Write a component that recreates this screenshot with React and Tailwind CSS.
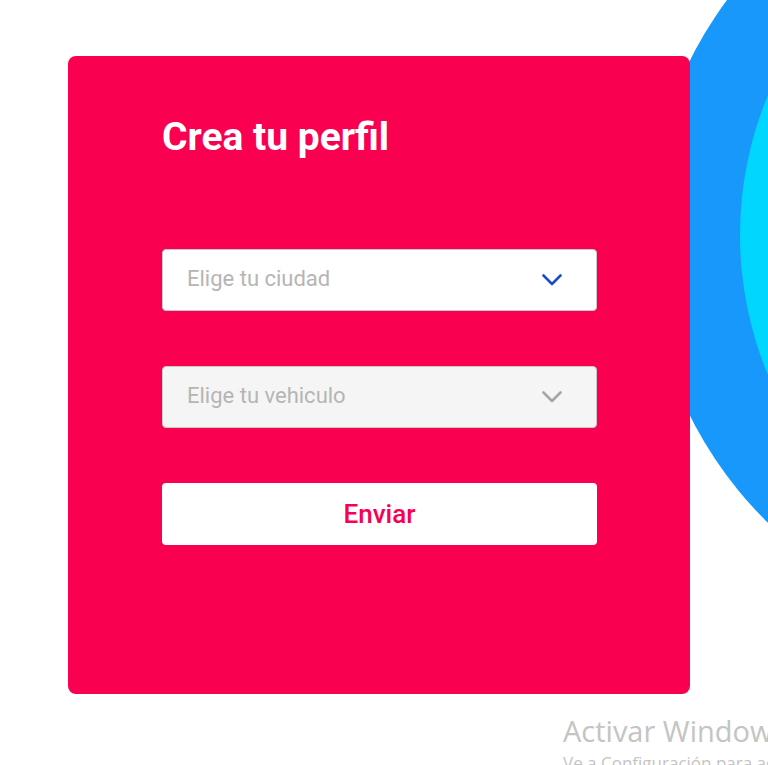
import React from 'react';

function Chevron({ className = '' }) {
  return (
    <svg className={className} width="20" height="12" viewBox="0 0 20 12" fill="none" stroke="currentColor">
      <path d="M1.5 1.5l8.5 8.5 8.5-8.5" strokeWidth="2.6" strokeLinecap="round" strokeLinejoin="round" />
    </svg>
  );
}

function SelectBox({ label, disabled = false }) {
  return (
    <div
      className={`flex items-center justify-between h-[62px] rounded-[4px] border border-[#c9c9c9] pl-[24px] pr-[34px] ${
        disabled ? 'bg-[#f5f5f5]' : 'bg-white'
      }`}
    >
      <span className="text-[22px] leading-[28px] -mt-[2px] text-[#b5b5b5]">{label}</span>
      <Chevron className={disabled ? 'text-[#a6a6a6]' : 'text-[#1b4fc4]'} />
    </div>
  );
}

export default function App() {
  return (
    <div className="relative w-full h-[765px] overflow-hidden bg-white font-['Roboto',sans-serif]">
      {/* decorative circles behind the card */}
      <div className="absolute left-[648px] top-[-160px] w-[796px] h-[796px] rounded-full bg-[#1898fb]"></div>
      <div className="absolute left-[740px] top-[-129px] w-[728px] h-[728px] rounded-full bg-[#00d6ff]"></div>

      <div className="relative z-10 ml-[68px] mt-[56px] w-[622px] h-[638px] rounded-[8px] bg-[#fa0050] pl-[94px] pt-[58px]">
        <h1 className="text-[39px] leading-[46px] font-bold text-white">Crea tu perfil</h1>
        <div className="w-[435px] mt-[89px] flex flex-col gap-[55px]">
          <SelectBox label="Elige tu ciudad" />
          <SelectBox label="Elige tu vehiculo" disabled />
          <button className="h-[62px] rounded-[4px] bg-white text-[#fa0050] text-[26px] leading-none font-medium">Enviar</button>
        </div>
      </div>

      {/* windows activation watermark */}
      <div className="absolute left-[563px] top-[710px] z-20 whitespace-nowrap font-['Open_Sans',sans-serif] text-[#c4c4c4]">
        <div className="text-[29px] leading-[42px]">Activar Windows</div>
        <div className="text-[17px] leading-[22px]">Ve a Configuración para activar Windows.</div>
      </div>
    </div>
  );
}
